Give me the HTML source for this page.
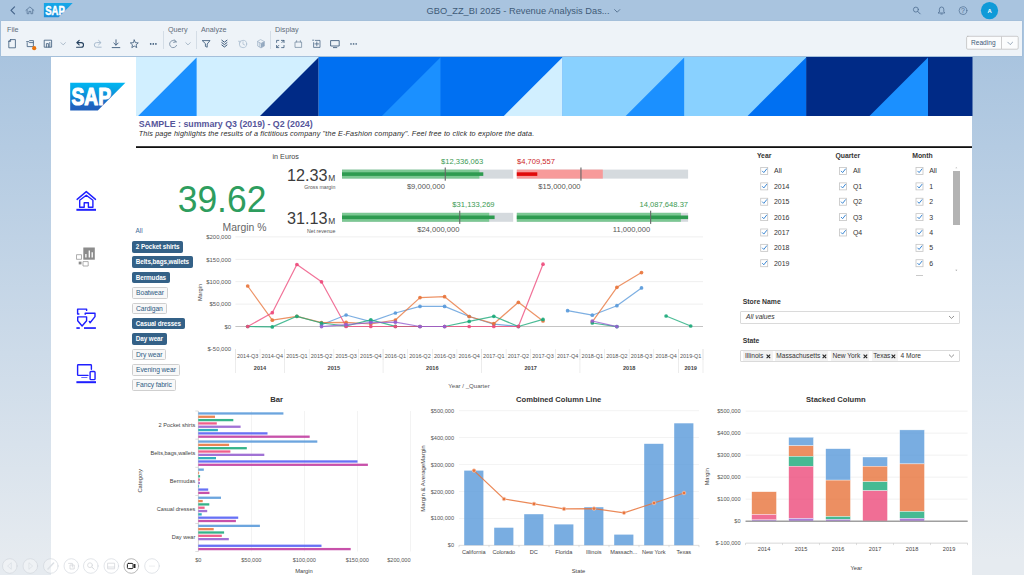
<!DOCTYPE html>
<html><head><meta charset="utf-8"><title>Revenue Analysis Dashboard</title>
<style>
*{box-sizing:border-box;margin:0;padding:0}
html,body{width:1024px;height:575px;overflow:hidden}
body{font-family:"Liberation Sans",sans-serif;position:relative;background:linear-gradient(to bottom,#a9c4df 0,#a9c4df 56px,#e6ebf0 560px,#e6ebf0 100%);color:#333}
.abs{position:absolute}
#hdr{left:0;top:0;width:1024px;height:21px;background:#a9c4df}
#tb{left:1px;top:21px;width:1021px;height:35px;background:#eef3f8;border-radius:0;box-shadow:0 0 1px rgba(120,150,180,.5)}
#page{left:51px;top:57px;width:921px;height:518px;background:#fff}
.t{position:absolute;white-space:nowrap;line-height:1}
svg{position:absolute;left:0;top:0;overflow:visible}
svg text{font-family:"Liberation Sans",sans-serif}
.cat{position:absolute;left:132px;height:11.5px;font-size:6.6px;line-height:10px;padding:0 3.1px;border-radius:1.5px;white-space:nowrap;letter-spacing:-0.1px}
.cat.s{background:#346187;color:#fff;font-weight:bold;border:0.7px solid #346187;font-size:6.35px;padding:0 2.8px}
.cat.u{background:#f8f8f8;color:#2f5c84;border:0.7px solid #cfcfcf;font-size:6.75px}
.cb{position:absolute;width:7px;height:7px;border:0.7px solid #a9a9a9;background:#fff;border-radius:.5px}
.cl{position:absolute;font-size:6.95px;line-height:8px;color:#333;white-space:nowrap}
.fh{position:absolute;font-size:6.85px;font-weight:bold;color:#333;line-height:8px;white-space:nowrap}
.dd{position:absolute;left:740px;width:220px;height:12.5px;border:0.7px solid #dadada;background:#fff;border-radius:1px}
.tok{position:absolute;top:351.3px;height:9.6px;background:#f2f2f2;font-size:6.6px;line-height:9.6px;color:#333;white-space:nowrap;padding-left:1.6px;border-radius:.5px}
</style></head><body>
<div id="hdr" class="abs"></div>
<div id="tb" class="abs"></div>
<div id="page" class="abs"></div>
<svg width="1024" height="575" viewBox="0 0 1024 575" style="z-index:1"><rect x="136" y="57" width="836" height="59" fill="#d1efff"/><rect x="136" y="57" width="61.099999999999994" height="59" fill="#d1efff"/><rect x="196.6" y="57" width="122.4" height="59" fill="#d1efff"/><rect x="318.5" y="57" width="122.39999999999998" height="59" fill="#0070f2"/><rect x="440.4" y="57" width="122.39999999999998" height="59" fill="#0070f2"/><rect x="562.3" y="57" width="122.40000000000009" height="59" fill="#89d1ff"/><rect x="684.2" y="57" width="122.39999999999998" height="59" fill="#89d1ff"/><rect x="806.1" y="57" width="122.39999999999998" height="59" fill="#002a86"/><rect x="928.0" y="57" width="44.5" height="59" fill="#002a86"/><polygon points="138.1,116 196.6,57.5 196.6,116" fill="#1b90ff"/><polygon points="260.0,116 318.5,57.5 318.5,116" fill="#002a86"/><polygon points="381.9,116 440.4,57.5 440.4,116" fill="#1b90ff"/><polygon points="503.79999999999995,116 562.3,57.5 562.3,116" fill="#d1efff"/><polygon points="625.7,116 684.2,57.5 684.2,116" fill="#1b90ff"/><polygon points="747.6,116 806.1,57.5 806.1,116" fill="#0070f2"/><polygon points="869.5,116 928.0,57.5 928.0,116" fill="#1b90ff"/><rect x="136" y="146.2" width="836" height="1.8" fill="#111"/></svg><svg width="1024" height="575" viewBox="0 0 1024 575" style="z-index:2"><defs><linearGradient id="g1" x1="0" y1="0" x2="0" y2="1"><stop offset="0" stop-color="#00b6f1"/><stop offset="0.25" stop-color="#06a5e5"/><stop offset="0.8" stop-color="#1e64c0"/><stop offset="1" stop-color="#1f5fbb"/></linearGradient></defs><polygon points="70.2,82.8 125.4,82.8 97.80000000000001,110.4 70.2,110.4" fill="url(#g1)"/><text x="71.4" y="105.1" font-size="23.4" font-weight="bold" fill="#fff" stroke="#fff" stroke-width="1.2" stroke-linejoin="round" textLength="39.6" lengthAdjust="spacingAndGlyphs">SAP</text><text x="138.7" y="126.9" font-size="8.9" fill="#56569a" text-anchor="start" font-weight="bold" font-style="normal" textLength="174" lengthAdjust="spacingAndGlyphs">SAMPLE : summary Q3 (2019) - Q2 (2024)</text><text x="138.7" y="135.9" font-size="7.2" fill="#2a2a2a" text-anchor="start" font-weight="normal" font-style="italic" textLength="395.5" lengthAdjust="spacing">This page highlights the results of a fictitious company "the E-Fashion company". Feel free to click to explore the data.</text><text x="177.7" y="211.6" font-size="37" fill="#2e9d5e" text-anchor="start" font-weight="normal" font-style="normal" textLength="88.7" lengthAdjust="spacingAndGlyphs">39.62</text><text x="266.5" y="231" font-size="10.4" fill="#666" text-anchor="end" font-weight="normal" font-style="normal" >Margin %</text><text x="272.5" y="159.2" font-size="7.2" fill="#444" text-anchor="start" font-weight="normal" font-style="normal" >in Euros</text><text x="327.4" y="180.5" font-size="16.2" fill="#3c3c3c" text-anchor="end" font-weight="normal" font-style="normal" >12.33</text><text x="328.2" y="180.5" font-size="8.4" fill="#3c3c3c" text-anchor="start" font-weight="normal" font-style="normal" >M</text><text x="335.3" y="189.1" font-size="5.2" fill="#555" text-anchor="end" font-weight="normal" font-style="normal" >Gross margin</text><text x="327.4" y="224" font-size="16.2" fill="#3c3c3c" text-anchor="end" font-weight="normal" font-style="normal" >31.13</text><text x="328.2" y="224" font-size="8.4" fill="#3c3c3c" text-anchor="start" font-weight="normal" font-style="normal" >M</text><text x="335.3" y="232.6" font-size="5.2" fill="#555" text-anchor="end" font-weight="normal" font-style="normal" >Net revenue</text><rect x="342" y="169.6" width="171.20000000000005" height="9" fill="#d5dade"/><rect x="342" y="169.6" width="137.39999999999998" height="9" fill="#7cc893"/><rect x="342" y="172.29999999999998" width="141.3" height="3.6" fill="#2e9b50"/><rect x="444.7" y="167.5" width="1.1" height="13.2" fill="#666"/><text x="483.3" y="163.7" font-size="7.6" fill="#3a9a52" text-anchor="end" font-weight="normal" font-style="normal" >$12,336,063</text><text x="444.9" y="188.6" font-size="7.6" fill="#555" text-anchor="end" font-weight="normal" font-style="normal" >$9,000,000</text><rect x="516.8" y="169.6" width="171.30000000000007" height="9" fill="#d5dade"/><rect x="516.8" y="169.6" width="86.0" height="9" fill="#f79a9a"/><rect x="516.8" y="172.29999999999998" width="20.5" height="3.6" fill="#e00b0b"/><rect x="580.4" y="167.5" width="1.1" height="13.2" fill="#666"/><text x="517" y="163.7" font-size="7.6" fill="#cc1f1f" text-anchor="start" font-weight="normal" font-style="normal" >$4,709,557</text><text x="580.6" y="188.6" font-size="7.6" fill="#555" text-anchor="end" font-weight="normal" font-style="normal" >$15,000,000</text><rect x="342" y="212.8" width="171.20000000000005" height="9" fill="#d5dade"/><rect x="342" y="212.8" width="147.2" height="9" fill="#7cc893"/><rect x="342" y="215.5" width="152.60000000000002" height="3.6" fill="#2e9b50"/><rect x="459.2" y="210.70000000000002" width="1.1" height="13.2" fill="#666"/><text x="494.6" y="206.9" font-size="7.6" fill="#3a9a52" text-anchor="end" font-weight="normal" font-style="normal" >$31,133,269</text><text x="459.4" y="231.8" font-size="7.6" fill="#555" text-anchor="end" font-weight="normal" font-style="normal" >$24,000,000</text><rect x="516.8" y="212.8" width="171.30000000000007" height="9" fill="#d5dade"/><rect x="516.8" y="212.8" width="164.10000000000002" height="9" fill="#7cc893"/><rect x="516.8" y="215.5" width="171.30000000000007" height="3.6" fill="#2e9b50"/><rect x="650.1" y="210.70000000000002" width="1.1" height="13.2" fill="#666"/><text x="688.1" y="206.9" font-size="7.6" fill="#3a9a52" text-anchor="end" font-weight="normal" font-style="normal" >14,087,648.37</text><text x="650.3000000000001" y="231.8" font-size="7.6" fill="#555" text-anchor="end" font-weight="normal" font-style="normal" >11,000,000</text><text x="231" y="351.09999999999997" font-size="5.95" fill="#555" text-anchor="end" font-weight="normal" font-style="normal" >$-50,000</text><rect x="235.4" y="326.1" width="467.6" height="0.8" fill="#b5b5b5"/><text x="231" y="328.7" font-size="5.95" fill="#555" text-anchor="end" font-weight="normal" font-style="normal" >$0</text><rect x="235.4" y="303.7" width="467.6" height="0.8" fill="#ebebeb"/><text x="231" y="306.29999999999995" font-size="5.95" fill="#555" text-anchor="end" font-weight="normal" font-style="normal" >$50,000</text><rect x="235.4" y="281.3" width="467.6" height="0.8" fill="#ebebeb"/><text x="231" y="283.9" font-size="5.95" fill="#555" text-anchor="end" font-weight="normal" font-style="normal" >$100,000</text><rect x="235.4" y="258.9" width="467.6" height="0.8" fill="#ebebeb"/><text x="231" y="261.49999999999994" font-size="5.95" fill="#555" text-anchor="end" font-weight="normal" font-style="normal" >$150,000</text><rect x="235.4" y="236.49999999999997" width="467.6" height="0.8" fill="#ebebeb"/><text x="231" y="239.09999999999997" font-size="5.95" fill="#555" text-anchor="end" font-weight="normal" font-style="normal" >$200,000</text><text transform="translate(201.6,292.5) rotate(-90)" font-size="5.6" fill="#444" text-anchor="middle">Margin</text><rect x="235.1" y="349" width="0.6" height="11" fill="#e4e4e4"/><rect x="259.7105263157895" y="349" width="0.6" height="11" fill="#e4e4e4"/><rect x="284.32105263157894" y="349" width="0.6" height="11" fill="#e4e4e4"/><rect x="308.93157894736845" y="349" width="0.6" height="11" fill="#e4e4e4"/><rect x="333.5421052631579" y="349" width="0.6" height="11" fill="#e4e4e4"/><rect x="358.15263157894736" y="349" width="0.6" height="11" fill="#e4e4e4"/><rect x="382.7631578947368" y="349" width="0.6" height="11" fill="#e4e4e4"/><rect x="407.3736842105263" y="349" width="0.6" height="11" fill="#e4e4e4"/><rect x="431.9842105263158" y="349" width="0.6" height="11" fill="#e4e4e4"/><rect x="456.5947368421053" y="349" width="0.6" height="11" fill="#e4e4e4"/><rect x="481.20526315789476" y="349" width="0.6" height="11" fill="#e4e4e4"/><rect x="505.8157894736842" y="349" width="0.6" height="11" fill="#e4e4e4"/><rect x="530.4263157894737" y="349" width="0.6" height="11" fill="#e4e4e4"/><rect x="555.0368421052632" y="349" width="0.6" height="11" fill="#e4e4e4"/><rect x="579.6473684210526" y="349" width="0.6" height="11" fill="#e4e4e4"/><rect x="604.2578947368422" y="349" width="0.6" height="11" fill="#e4e4e4"/><rect x="628.8684210526317" y="349" width="0.6" height="11" fill="#e4e4e4"/><rect x="653.4789473684211" y="349" width="0.6" height="11" fill="#e4e4e4"/><rect x="678.0894736842106" y="349" width="0.6" height="11" fill="#e4e4e4"/><rect x="702.7" y="349" width="0.6" height="11" fill="#e4e4e4"/><rect x="235.1" y="349" width="0.6" height="24" fill="#e0e0e0"/><rect x="284.32105263157894" y="349" width="0.6" height="24" fill="#e0e0e0"/><rect x="382.7631578947368" y="349" width="0.6" height="24" fill="#e0e0e0"/><rect x="481.20526315789476" y="349" width="0.6" height="24" fill="#e0e0e0"/><rect x="579.6473684210526" y="349" width="0.6" height="24" fill="#e0e0e0"/><rect x="678.0894736842106" y="349" width="0.6" height="24" fill="#e0e0e0"/><rect x="702.7" y="349" width="0.6" height="24" fill="#e0e0e0"/><text x="247.7" y="357.5" font-size="5.5" fill="#555" text-anchor="middle" font-weight="normal" font-style="normal" >2014-Q3</text><text x="272.3" y="357.5" font-size="5.5" fill="#555" text-anchor="middle" font-weight="normal" font-style="normal" >2014-Q4</text><text x="296.9" y="357.5" font-size="5.5" fill="#555" text-anchor="middle" font-weight="normal" font-style="normal" >2015-Q1</text><text x="321.5" y="357.5" font-size="5.5" fill="#555" text-anchor="middle" font-weight="normal" font-style="normal" >2015-Q2</text><text x="346.1" y="357.5" font-size="5.5" fill="#555" text-anchor="middle" font-weight="normal" font-style="normal" >2015-Q3</text><text x="370.8" y="357.5" font-size="5.5" fill="#555" text-anchor="middle" font-weight="normal" font-style="normal" >2015-Q4</text><text x="395.4" y="357.5" font-size="5.5" fill="#555" text-anchor="middle" font-weight="normal" font-style="normal" >2016-Q1</text><text x="420.0" y="357.5" font-size="5.5" fill="#555" text-anchor="middle" font-weight="normal" font-style="normal" >2016-Q2</text><text x="444.6" y="357.5" font-size="5.5" fill="#555" text-anchor="middle" font-weight="normal" font-style="normal" >2016-Q3</text><text x="469.2" y="357.5" font-size="5.5" fill="#555" text-anchor="middle" font-weight="normal" font-style="normal" >2016-Q4</text><text x="493.8" y="357.5" font-size="5.5" fill="#555" text-anchor="middle" font-weight="normal" font-style="normal" >2017-Q1</text><text x="518.4" y="357.5" font-size="5.5" fill="#555" text-anchor="middle" font-weight="normal" font-style="normal" >2017-Q2</text><text x="543.0" y="357.5" font-size="5.5" fill="#555" text-anchor="middle" font-weight="normal" font-style="normal" >2017-Q3</text><text x="567.6" y="357.5" font-size="5.5" fill="#555" text-anchor="middle" font-weight="normal" font-style="normal" >2017-Q4</text><text x="592.3" y="357.5" font-size="5.5" fill="#555" text-anchor="middle" font-weight="normal" font-style="normal" >2018-Q1</text><text x="616.9" y="357.5" font-size="5.5" fill="#555" text-anchor="middle" font-weight="normal" font-style="normal" >2018-Q2</text><text x="641.5" y="357.5" font-size="5.5" fill="#555" text-anchor="middle" font-weight="normal" font-style="normal" >2018-Q3</text><text x="666.1" y="357.5" font-size="5.5" fill="#555" text-anchor="middle" font-weight="normal" font-style="normal" >2018-Q4</text><text x="690.7" y="357.5" font-size="5.5" fill="#555" text-anchor="middle" font-weight="normal" font-style="normal" >2019-Q1</text><text x="260.0" y="369.8" font-size="5.6" fill="#444" text-anchor="middle" font-weight="bold" font-style="normal" >2014</text><text x="333.8" y="369.8" font-size="5.6" fill="#444" text-anchor="middle" font-weight="bold" font-style="normal" >2015</text><text x="432.3" y="369.8" font-size="5.6" fill="#444" text-anchor="middle" font-weight="bold" font-style="normal" >2016</text><text x="530.7" y="369.8" font-size="5.6" fill="#444" text-anchor="middle" font-weight="bold" font-style="normal" >2017</text><text x="629.2" y="369.8" font-size="5.6" fill="#444" text-anchor="middle" font-weight="bold" font-style="normal" >2018</text><text x="690.7" y="369.8" font-size="5.6" fill="#444" text-anchor="middle" font-weight="bold" font-style="normal" >2019</text><text x="469" y="388.1" font-size="6.1" fill="#555" text-anchor="middle" font-weight="normal" font-style="normal" >Year / _Quarter</text><polyline points="321.5,324.7 346.1,315.0 370.8,321.6 395.4,313.0 420.0,306.4 444.6,306.4 469.2,316.5 493.8,324.2 518.4,326.4" fill="none" stroke="#5899DA" stroke-width="1.2" stroke-linejoin="round" opacity="0.78"/><circle cx="321.5" cy="324.7" r="1.85" fill="#5899DA" opacity="0.9"/><circle cx="346.1" cy="315.0" r="1.85" fill="#5899DA" opacity="0.9"/><circle cx="370.8" cy="321.6" r="1.85" fill="#5899DA" opacity="0.9"/><circle cx="395.4" cy="313.0" r="1.85" fill="#5899DA" opacity="0.9"/><circle cx="420.0" cy="306.4" r="1.85" fill="#5899DA" opacity="0.9"/><circle cx="444.6" cy="306.4" r="1.85" fill="#5899DA" opacity="0.9"/><circle cx="469.2" cy="316.5" r="1.85" fill="#5899DA" opacity="0.9"/><circle cx="493.8" cy="324.2" r="1.85" fill="#5899DA" opacity="0.9"/><circle cx="518.4" cy="326.4" r="1.85" fill="#5899DA" opacity="0.9"/><polyline points="567.6,310.7 592.3,315.2 616.9,305.7 641.5,287.9" fill="none" stroke="#5899DA" stroke-width="1.2" stroke-linejoin="round" opacity="0.78"/><circle cx="567.6" cy="310.7" r="1.85" fill="#5899DA" opacity="0.9"/><circle cx="592.3" cy="315.2" r="1.85" fill="#5899DA" opacity="0.9"/><circle cx="616.9" cy="305.7" r="1.85" fill="#5899DA" opacity="0.9"/><circle cx="641.5" cy="287.9" r="1.85" fill="#5899DA" opacity="0.9"/><polyline points="247.7,286.0 272.3,320.2 296.9,316.3 321.5,322.6 346.1,322.4 370.8,324.0 395.4,320.0 420.0,297.6 444.6,296.7 469.2,316.5 493.8,323.7 518.4,302.3 543.0,321.0" fill="none" stroke="#E8743B" stroke-width="1.2" stroke-linejoin="round" opacity="0.78"/><circle cx="247.7" cy="286.0" r="1.85" fill="#E8743B" opacity="0.9"/><circle cx="272.3" cy="320.2" r="1.85" fill="#E8743B" opacity="0.9"/><circle cx="296.9" cy="316.3" r="1.85" fill="#E8743B" opacity="0.9"/><circle cx="321.5" cy="322.6" r="1.85" fill="#E8743B" opacity="0.9"/><circle cx="346.1" cy="322.4" r="1.85" fill="#E8743B" opacity="0.9"/><circle cx="370.8" cy="324.0" r="1.85" fill="#E8743B" opacity="0.9"/><circle cx="395.4" cy="320.0" r="1.85" fill="#E8743B" opacity="0.9"/><circle cx="420.0" cy="297.6" r="1.85" fill="#E8743B" opacity="0.9"/><circle cx="444.6" cy="296.7" r="1.85" fill="#E8743B" opacity="0.9"/><circle cx="469.2" cy="316.5" r="1.85" fill="#E8743B" opacity="0.9"/><circle cx="493.8" cy="323.7" r="1.85" fill="#E8743B" opacity="0.9"/><circle cx="518.4" cy="302.3" r="1.85" fill="#E8743B" opacity="0.9"/><circle cx="543.0" cy="321.0" r="1.85" fill="#E8743B" opacity="0.9"/><polyline points="592.3,321.8 616.9,287.3 641.5,272.6" fill="none" stroke="#E8743B" stroke-width="1.2" stroke-linejoin="round" opacity="0.78"/><circle cx="592.3" cy="321.8" r="1.85" fill="#E8743B" opacity="0.9"/><circle cx="616.9" cy="287.3" r="1.85" fill="#E8743B" opacity="0.9"/><circle cx="641.5" cy="272.6" r="1.85" fill="#E8743B" opacity="0.9"/><polyline points="247.7,326.5 272.3,326.9 296.9,316.3 321.5,323.0 346.1,326.0 370.8,319.8 395.4,326.4 420.0,326.5 444.6,326.5 469.2,321.4 493.8,316.3 518.4,326.5 543.0,319.4" fill="none" stroke="#19A979" stroke-width="1.2" stroke-linejoin="round" opacity="0.78"/><circle cx="247.7" cy="326.5" r="1.85" fill="#19A979" opacity="0.9"/><circle cx="272.3" cy="326.9" r="1.85" fill="#19A979" opacity="0.9"/><circle cx="296.9" cy="316.3" r="1.85" fill="#19A979" opacity="0.9"/><circle cx="321.5" cy="323.0" r="1.85" fill="#19A979" opacity="0.9"/><circle cx="346.1" cy="326.0" r="1.85" fill="#19A979" opacity="0.9"/><circle cx="370.8" cy="319.8" r="1.85" fill="#19A979" opacity="0.9"/><circle cx="395.4" cy="326.4" r="1.85" fill="#19A979" opacity="0.9"/><circle cx="420.0" cy="326.5" r="1.85" fill="#19A979" opacity="0.9"/><circle cx="444.6" cy="326.5" r="1.85" fill="#19A979" opacity="0.9"/><circle cx="469.2" cy="321.4" r="1.85" fill="#19A979" opacity="0.9"/><circle cx="493.8" cy="316.3" r="1.85" fill="#19A979" opacity="0.9"/><circle cx="518.4" cy="326.5" r="1.85" fill="#19A979" opacity="0.9"/><circle cx="543.0" cy="319.4" r="1.85" fill="#19A979" opacity="0.9"/><polyline points="592.3,323.0 616.9,326.6" fill="none" stroke="#19A979" stroke-width="1.2" stroke-linejoin="round" opacity="0.78"/><circle cx="592.3" cy="323.0" r="1.85" fill="#19A979" opacity="0.9"/><circle cx="616.9" cy="326.6" r="1.85" fill="#19A979" opacity="0.9"/><polyline points="666.1,316.0 690.7,326.0" fill="none" stroke="#19A979" stroke-width="1.2" stroke-linejoin="round" opacity="0.78"/><circle cx="666.1" cy="316.0" r="1.85" fill="#19A979" opacity="0.9"/><circle cx="690.7" cy="326.0" r="1.85" fill="#19A979" opacity="0.9"/><polyline points="247.7,326.5 272.3,312.7 296.9,264.5 321.5,281.8 346.1,326.5 370.8,326.5 395.4,326.5 420.0,326.5 444.6,326.5 469.2,326.5 493.8,326.5 518.4,326.5 543.0,264.2" fill="none" stroke="#ED4A7B" stroke-width="1.2" stroke-linejoin="round" opacity="0.78"/><circle cx="247.7" cy="326.5" r="1.85" fill="#ED4A7B" opacity="0.9"/><circle cx="272.3" cy="312.7" r="1.85" fill="#ED4A7B" opacity="0.9"/><circle cx="296.9" cy="264.5" r="1.85" fill="#ED4A7B" opacity="0.9"/><circle cx="321.5" cy="281.8" r="1.85" fill="#ED4A7B" opacity="0.9"/><circle cx="346.1" cy="326.5" r="1.85" fill="#ED4A7B" opacity="0.9"/><circle cx="370.8" cy="326.5" r="1.85" fill="#ED4A7B" opacity="0.9"/><circle cx="395.4" cy="326.5" r="1.85" fill="#ED4A7B" opacity="0.9"/><circle cx="420.0" cy="326.5" r="1.85" fill="#ED4A7B" opacity="0.9"/><circle cx="444.6" cy="326.5" r="1.85" fill="#ED4A7B" opacity="0.9"/><circle cx="469.2" cy="326.5" r="1.85" fill="#ED4A7B" opacity="0.9"/><circle cx="493.8" cy="326.5" r="1.85" fill="#ED4A7B" opacity="0.9"/><circle cx="518.4" cy="326.5" r="1.85" fill="#ED4A7B" opacity="0.9"/><circle cx="543.0" cy="264.2" r="1.85" fill="#ED4A7B" opacity="0.9"/><polyline points="321.5,326.6 346.1,324.7 370.8,322.6 395.4,322.2 420.0,326.5 444.6,326.5" fill="none" stroke="#945ECF" stroke-width="1.2" stroke-linejoin="round" opacity="0.78"/><circle cx="321.5" cy="326.6" r="1.85" fill="#945ECF" opacity="0.9"/><circle cx="346.1" cy="324.7" r="1.85" fill="#945ECF" opacity="0.9"/><circle cx="370.8" cy="322.6" r="1.85" fill="#945ECF" opacity="0.9"/><circle cx="395.4" cy="322.2" r="1.85" fill="#945ECF" opacity="0.9"/><circle cx="420.0" cy="326.5" r="1.85" fill="#945ECF" opacity="0.9"/><circle cx="444.6" cy="326.5" r="1.85" fill="#945ECF" opacity="0.9"/><polyline points="592.3,321.0 616.9,326.6" fill="none" stroke="#945ECF" stroke-width="1.2" stroke-linejoin="round" opacity="0.78"/><circle cx="592.3" cy="321.0" r="1.85" fill="#945ECF" opacity="0.9"/><circle cx="616.9" cy="326.6" r="1.85" fill="#945ECF" opacity="0.9"/><text x="276.6" y="402.1" font-size="7.7" fill="#333" text-anchor="middle" font-weight="bold" font-style="normal" >Bar</text><rect x="251.0" y="411.0" width="0.6" height="140.5" fill="#ececec"/><rect x="304.0" y="411.0" width="0.6" height="140.5" fill="#ececec"/><rect x="357.0" y="411.0" width="0.6" height="140.5" fill="#ececec"/><rect x="410.0" y="411.0" width="0.6" height="140.5" fill="#ececec"/><rect x="197.9" y="411.0" width="0.8" height="140.5" fill="#c8c8c8"/><rect x="195.3" y="410.7" width="3" height="0.6" fill="#c8c8c8"/><text x="195.3" y="426.8" font-size="5.6" fill="#444" text-anchor="end" font-weight="normal" font-style="normal" >2 Pocket shirts</text><rect x="198.3" y="412.31" width="85.1" height="2.3" fill="#5899DA" opacity="0.88"/><rect x="198.3" y="415.63" width="16.7" height="2.3" fill="#E8743B" opacity="0.88"/><rect x="198.3" y="418.95" width="35" height="2.3" fill="#19A979" opacity="0.88"/><rect x="198.3" y="422.27" width="18.5" height="2.3" fill="#ED4A7B" opacity="0.88"/><rect x="198.3" y="425.59" width="42.3" height="2.3" fill="#945ECF" opacity="0.88"/><rect x="198.3" y="428.91" width="19.6" height="2.3" fill="#13A4B4" opacity="0.88"/><rect x="198.3" y="432.23" width="69.2" height="2.3" fill="#525DF4" opacity="0.88"/><rect x="198.3" y="435.55" width="111.4" height="2.3" fill="#BF399E" opacity="0.88"/><rect x="195.3" y="438.8" width="3" height="0.6" fill="#c8c8c8"/><text x="195.3" y="454.9" font-size="5.6" fill="#444" text-anchor="end" font-weight="normal" font-style="normal" >Belts,bags,wallets</text><rect x="198.3" y="440.41" width="119" height="2.3" fill="#5899DA" opacity="0.88"/><rect x="198.3" y="443.73" width="30.8" height="2.3" fill="#E8743B" opacity="0.88"/><rect x="198.3" y="447.05" width="48.5" height="2.3" fill="#19A979" opacity="0.88"/><rect x="198.3" y="450.37" width="32.1" height="2.3" fill="#ED4A7B" opacity="0.88"/><rect x="198.3" y="453.69" width="66" height="2.3" fill="#945ECF" opacity="0.88"/><rect x="198.3" y="457.01" width="17.7" height="2.3" fill="#13A4B4" opacity="0.88"/><rect x="198.3" y="460.33" width="159.2" height="2.3" fill="#525DF4" opacity="0.88"/><rect x="198.3" y="463.65" width="169.6" height="2.3" fill="#BF399E" opacity="0.88"/><rect x="195.3" y="466.9" width="3" height="0.6" fill="#c8c8c8"/><text x="195.3" y="482.9" font-size="5.6" fill="#444" text-anchor="end" font-weight="normal" font-style="normal" >Bermudas</text><rect x="198.3" y="468.51" width="5.5" height="2.3" fill="#5899DA" opacity="0.88"/><rect x="198.3" y="471.83" width="0.8" height="2.3" fill="#E8743B" opacity="0.88"/><rect x="198.3" y="475.15" width="1.8" height="2.3" fill="#19A979" opacity="0.88"/><rect x="198.3" y="478.47" width="1.6" height="2.3" fill="#ED4A7B" opacity="0.88"/><rect x="198.3" y="481.79" width="1.6" height="2.3" fill="#945ECF" opacity="0.88"/><rect x="198.3" y="485.11" width="0.8" height="2.3" fill="#13A4B4" opacity="0.88"/><rect x="198.3" y="488.43" width="9.9" height="2.3" fill="#525DF4" opacity="0.88"/><rect x="198.3" y="491.75" width="11.2" height="2.3" fill="#BF399E" opacity="0.88"/><rect x="195.3" y="495.0" width="3" height="0.6" fill="#c8c8c8"/><text x="195.3" y="511.1" font-size="5.6" fill="#444" text-anchor="end" font-weight="normal" font-style="normal" >Casual dresses</text><rect x="198.3" y="496.61" width="22.7" height="2.3" fill="#5899DA" opacity="0.88"/><rect x="198.3" y="499.93" width="4.4" height="2.3" fill="#E8743B" opacity="0.88"/><rect x="198.3" y="503.25" width="11" height="2.3" fill="#19A979" opacity="0.88"/><rect x="198.3" y="506.57" width="6.3" height="2.3" fill="#ED4A7B" opacity="0.88"/><rect x="198.3" y="509.89" width="8.9" height="2.3" fill="#945ECF" opacity="0.88"/><rect x="198.3" y="513.21" width="3.4" height="2.3" fill="#13A4B4" opacity="0.88"/><rect x="198.3" y="516.53" width="39.9" height="2.3" fill="#525DF4" opacity="0.88"/><rect x="198.3" y="519.85" width="37.6" height="2.3" fill="#BF399E" opacity="0.88"/><rect x="195.3" y="523.1" width="3" height="0.6" fill="#c8c8c8"/><text x="195.3" y="539.1" font-size="5.6" fill="#444" text-anchor="end" font-weight="normal" font-style="normal" >Day wear</text><rect x="198.3" y="524.71" width="61.6" height="2.3" fill="#5899DA" opacity="0.88"/><rect x="198.3" y="528.03" width="15.4" height="2.3" fill="#E8743B" opacity="0.88"/><rect x="198.3" y="531.35" width="25.8" height="2.3" fill="#19A979" opacity="0.88"/><rect x="198.3" y="534.67" width="23.5" height="2.3" fill="#ED4A7B" opacity="0.88"/><rect x="198.3" y="537.99" width="30.5" height="2.3" fill="#945ECF" opacity="0.88"/><rect x="198.3" y="544.63" width="123.2" height="2.3" fill="#525DF4" opacity="0.88"/><rect x="198.3" y="547.95" width="152.4" height="2.3" fill="#BF399E" opacity="0.88"/><rect x="195.3" y="551.2" width="3" height="0.6" fill="#c8c8c8"/><text x="198.3" y="562" font-size="5.6" fill="#555" text-anchor="middle" font-weight="normal" font-style="normal" >$0</text><text x="251.3" y="562" font-size="5.6" fill="#555" text-anchor="middle" font-weight="normal" font-style="normal" >$50,000</text><text x="304.3" y="562" font-size="5.6" fill="#555" text-anchor="middle" font-weight="normal" font-style="normal" >$100,000</text><text x="357.3" y="562" font-size="5.6" fill="#555" text-anchor="middle" font-weight="normal" font-style="normal" >$150,000</text><text x="410.5" y="562" font-size="5.6" fill="#555" text-anchor="end" font-weight="normal" font-style="normal" >$200,000</text><text x="304" y="572.6" font-size="5.8" fill="#444" text-anchor="middle" font-weight="normal" font-style="normal" >Margin</text><text transform="translate(142.3,480.8) rotate(-90)" font-size="5.8" fill="#444" text-anchor="middle">Category</text><text x="558.7" y="402.1" font-size="7.6" fill="#333" text-anchor="middle" font-weight="bold" font-style="normal" textLength="85.2" lengthAdjust="spacing">Combined Column Line</text><rect x="459.0" y="544.9" width="240.0" height="0.6" fill="#c8c8c8"/><text x="454" y="547.3" font-size="5.6" fill="#555" text-anchor="end" font-weight="normal" font-style="normal" >$0</text><rect x="459.0" y="518.02" width="240.0" height="0.6" fill="#ececec"/><text x="454" y="520.4" font-size="5.6" fill="#555" text-anchor="end" font-weight="normal" font-style="normal" >$100,000</text><rect x="459.0" y="491.14" width="240.0" height="0.6" fill="#ececec"/><text x="454" y="493.5" font-size="5.6" fill="#555" text-anchor="end" font-weight="normal" font-style="normal" >$200,000</text><rect x="459.0" y="464.26" width="240.0" height="0.6" fill="#ececec"/><text x="454" y="466.7" font-size="5.6" fill="#555" text-anchor="end" font-weight="normal" font-style="normal" >$300,000</text><rect x="459.0" y="437.38" width="240.0" height="0.6" fill="#ececec"/><text x="454" y="439.8" font-size="5.6" fill="#555" text-anchor="end" font-weight="normal" font-style="normal" >$400,000</text><rect x="459.0" y="410.5" width="240.0" height="0.6" fill="#ececec"/><text x="454" y="412.9" font-size="5.6" fill="#555" text-anchor="end" font-weight="normal" font-style="normal" >$500,000</text><rect x="464.2" y="470.6" width="19.2" height="74.6" fill="#5899DA" opacity="0.8"/><text x="473.8" y="553.7" font-size="5.6" fill="#444" text-anchor="middle" font-weight="normal" font-style="normal" >California</text><rect x="494.2" y="527.7" width="19.2" height="17.5" fill="#5899DA" opacity="0.8"/><text x="503.8" y="553.7" font-size="5.6" fill="#444" text-anchor="middle" font-weight="normal" font-style="normal" >Colorado</text><rect x="524.2" y="514.2" width="19.2" height="31.0" fill="#5899DA" opacity="0.8"/><text x="533.8" y="553.7" font-size="5.6" fill="#444" text-anchor="middle" font-weight="normal" font-style="normal" >DC</text><rect x="554.2" y="524.4" width="19.2" height="20.8" fill="#5899DA" opacity="0.8"/><text x="563.8" y="553.7" font-size="5.6" fill="#444" text-anchor="middle" font-weight="normal" font-style="normal" >Florida</text><rect x="584.2" y="507.2" width="19.2" height="38.0" fill="#5899DA" opacity="0.8"/><text x="593.8" y="553.7" font-size="5.6" fill="#444" text-anchor="middle" font-weight="normal" font-style="normal" >Illinois</text><rect x="614.2" y="534.6" width="19.2" height="10.6" fill="#5899DA" opacity="0.8"/><text x="623.8" y="553.7" font-size="5.6" fill="#444" text-anchor="middle" font-weight="normal" font-style="normal" >Massach...</text><rect x="644.2" y="443.8" width="19.2" height="101.4" fill="#5899DA" opacity="0.8"/><text x="653.8" y="553.7" font-size="5.6" fill="#444" text-anchor="middle" font-weight="normal" font-style="normal" >New York</text><rect x="674.2" y="423.3" width="19.2" height="121.9" fill="#5899DA" opacity="0.8"/><text x="683.8" y="553.7" font-size="5.6" fill="#444" text-anchor="middle" font-weight="normal" font-style="normal" >Texas</text><rect x="458.7" y="545.2" width="0.6" height="2" fill="#c8c8c8"/><rect x="488.7" y="545.2" width="0.6" height="2" fill="#c8c8c8"/><rect x="518.7" y="545.2" width="0.6" height="2" fill="#c8c8c8"/><rect x="548.7" y="545.2" width="0.6" height="2" fill="#c8c8c8"/><rect x="578.7" y="545.2" width="0.6" height="2" fill="#c8c8c8"/><rect x="608.7" y="545.2" width="0.6" height="2" fill="#c8c8c8"/><rect x="638.7" y="545.2" width="0.6" height="2" fill="#c8c8c8"/><rect x="668.7" y="545.2" width="0.6" height="2" fill="#c8c8c8"/><rect x="698.7" y="545.2" width="0.6" height="2" fill="#c8c8c8"/><polyline points="474.0,470.6 504.0,499.0 534.0,503.9 564.0,508.9 594.0,508.6 624.0,512.8 654.0,503.0 684.0,493.0" fill="none" stroke="#E8743B" stroke-width="1.2" opacity="0.85"/><circle cx="474.0" cy="470.6" r="1.8" fill="#E8743B" stroke="#f6c4ad" stroke-width="0.7"/><circle cx="504.0" cy="499.0" r="1.8" fill="#E8743B" stroke="#f6c4ad" stroke-width="0.7"/><circle cx="534.0" cy="503.9" r="1.8" fill="#E8743B" stroke="#f6c4ad" stroke-width="0.7"/><circle cx="564.0" cy="508.9" r="1.8" fill="#E8743B" stroke="#f6c4ad" stroke-width="0.7"/><circle cx="594.0" cy="508.6" r="1.8" fill="#E8743B" stroke="#f6c4ad" stroke-width="0.7"/><circle cx="624.0" cy="512.8" r="1.8" fill="#E8743B" stroke="#f6c4ad" stroke-width="0.7"/><circle cx="654.0" cy="503.0" r="1.8" fill="#E8743B" stroke="#f6c4ad" stroke-width="0.7"/><circle cx="684.0" cy="493.0" r="1.8" fill="#E8743B" stroke="#f6c4ad" stroke-width="0.7"/><text x="578.5" y="572.6" font-size="5.8" fill="#444" text-anchor="middle" font-weight="normal" font-style="normal" >State</text><text transform="translate(425,478.5) rotate(-90)" font-size="6.05" fill="#444" text-anchor="middle">Margin &amp; AverageMargin</text><text x="835.8" y="402.1" font-size="7.6" fill="#333" text-anchor="middle" font-weight="bold" font-style="normal" textLength="59.5" lengthAdjust="spacing">Stacked Column</text><rect x="745.6" y="542.75" width="222.0" height="0.7" fill="#c8c8c8"/><text x="740.6" y="545.2" font-size="5.6" fill="#555" text-anchor="end" font-weight="normal" font-style="normal" >$-100,000</text><rect x="745.6" y="520.75" width="222.0" height="0.7" fill="#9a9a9a"/><text x="740.6" y="523.2" font-size="5.6" fill="#555" text-anchor="end" font-weight="normal" font-style="normal" >$0</text><rect x="745.6" y="498.75" width="222.0" height="0.7" fill="#ececec"/><text x="740.6" y="501.2" font-size="5.6" fill="#555" text-anchor="end" font-weight="normal" font-style="normal" >$100,000</text><rect x="745.6" y="476.75" width="222.0" height="0.7" fill="#ececec"/><text x="740.6" y="479.2" font-size="5.6" fill="#555" text-anchor="end" font-weight="normal" font-style="normal" >$200,000</text><rect x="745.6" y="454.75" width="222.0" height="0.7" fill="#ececec"/><text x="740.6" y="457.2" font-size="5.6" fill="#555" text-anchor="end" font-weight="normal" font-style="normal" >$300,000</text><rect x="745.6" y="432.75" width="222.0" height="0.7" fill="#ececec"/><text x="740.6" y="435.2" font-size="5.6" fill="#555" text-anchor="end" font-weight="normal" font-style="normal" >$400,000</text><rect x="745.6" y="410.75" width="222.0" height="0.7" fill="#ececec"/><text x="740.6" y="413.2" font-size="5.6" fill="#555" text-anchor="end" font-weight="normal" font-style="normal" >$500,000</text><rect x="751.7" y="491.7" width="24.8" height="22.8" fill="#E8743B" opacity="0.8" stroke="#fff" stroke-width="0.4"/><rect x="751.7" y="514.5" width="24.8" height="5.4" fill="#ED4A7B" opacity="0.8" stroke="#fff" stroke-width="0.4"/><rect x="751.7" y="519.9" width="24.8" height="1.2" fill="#945ECF" opacity="0.8" stroke="#fff" stroke-width="0.4"/><text x="764.1" y="551.3" font-size="5.6" fill="#444" text-anchor="middle" font-weight="normal" font-style="normal" >2014</text><rect x="788.7" y="437.2" width="24.8" height="8.6" fill="#5899DA" opacity="0.8" stroke="#fff" stroke-width="0.4"/><rect x="788.7" y="445.8" width="24.8" height="10.5" fill="#E8743B" opacity="0.8" stroke="#fff" stroke-width="0.4"/><rect x="788.7" y="456.3" width="24.8" height="9.9" fill="#19A979" opacity="0.8" stroke="#fff" stroke-width="0.4"/><rect x="788.7" y="466.2" width="24.8" height="52.2" fill="#ED4A7B" opacity="0.8" stroke="#fff" stroke-width="0.4"/><rect x="788.7" y="518.4" width="24.8" height="2.7" fill="#945ECF" opacity="0.8" stroke="#fff" stroke-width="0.4"/><text x="801.1" y="551.3" font-size="5.6" fill="#444" text-anchor="middle" font-weight="normal" font-style="normal" >2015</text><rect x="825.7" y="448.7" width="24.8" height="31.4" fill="#5899DA" opacity="0.8" stroke="#fff" stroke-width="0.4"/><rect x="825.7" y="480.1" width="24.8" height="36.4" fill="#E8743B" opacity="0.8" stroke="#fff" stroke-width="0.4"/><rect x="825.7" y="516.5" width="24.8" height="2.9" fill="#19A979" opacity="0.8" stroke="#fff" stroke-width="0.4"/><rect x="825.7" y="519.4" width="24.8" height="1.7" fill="#945ECF" opacity="0.8" stroke="#fff" stroke-width="0.4"/><text x="838.1" y="551.3" font-size="5.6" fill="#444" text-anchor="middle" font-weight="normal" font-style="normal" >2016</text><rect x="862.7" y="457.0" width="24.8" height="9.2" fill="#5899DA" opacity="0.8" stroke="#fff" stroke-width="0.4"/><rect x="862.7" y="466.2" width="24.8" height="15.6" fill="#E8743B" opacity="0.8" stroke="#fff" stroke-width="0.4"/><rect x="862.7" y="481.8" width="24.8" height="8.9" fill="#19A979" opacity="0.8" stroke="#fff" stroke-width="0.4"/><rect x="862.7" y="490.7" width="24.8" height="30.4" fill="#ED4A7B" opacity="0.8" stroke="#fff" stroke-width="0.4"/><text x="875.1" y="551.3" font-size="5.6" fill="#444" text-anchor="middle" font-weight="normal" font-style="normal" >2017</text><rect x="899.7" y="429.9" width="24.8" height="34.0" fill="#5899DA" opacity="0.8" stroke="#fff" stroke-width="0.4"/><rect x="899.7" y="463.9" width="24.8" height="47.6" fill="#E8743B" opacity="0.8" stroke="#fff" stroke-width="0.4"/><rect x="899.7" y="511.5" width="24.8" height="6.9" fill="#19A979" opacity="0.8" stroke="#fff" stroke-width="0.4"/><rect x="899.7" y="518.4" width="24.8" height="2.7" fill="#945ECF" opacity="0.8" stroke="#fff" stroke-width="0.4"/><text x="912.1" y="551.3" font-size="5.6" fill="#444" text-anchor="middle" font-weight="normal" font-style="normal" >2018</text><text x="949.1" y="551.3" font-size="5.6" fill="#444" text-anchor="middle" font-weight="normal" font-style="normal" >2019</text><rect x="745.3" y="543.1" width="0.6" height="2" fill="#c8c8c8"/><rect x="782.3" y="543.1" width="0.6" height="2" fill="#c8c8c8"/><rect x="819.3" y="543.1" width="0.6" height="2" fill="#c8c8c8"/><rect x="856.3" y="543.1" width="0.6" height="2" fill="#c8c8c8"/><rect x="893.3" y="543.1" width="0.6" height="2" fill="#c8c8c8"/><rect x="930.3" y="543.1" width="0.6" height="2" fill="#c8c8c8"/><rect x="967.3" y="543.1" width="0.6" height="2" fill="#c8c8c8"/><rect x="745.6" y="520.7" width="222.0" height="1.2" fill="#9a9a9a"/><text x="856.3" y="569.8" font-size="5.8" fill="#444" text-anchor="middle" font-weight="normal" font-style="normal" >Year</text><text transform="translate(709.3,476.8) rotate(-90)" font-size="5.6" fill="#444" text-anchor="middle">Margin</text></svg><div class="abs" style="left:0;top:0;width:1024px;height:575px;z-index:3"><div class="t" style="left:135.5px;top:228px;font-size:6.4px;color:#3d6a99">All</div><div class="cat s" style="top:241.10px">2 Pocket shirts</div><div class="cat s" style="top:256.47px">Belts,bags,wallets</div><div class="cat s" style="top:271.84px">Bermudas</div><div class="cat u" style="top:287.21px">Boatwear</div><div class="cat u" style="top:302.58px">Cardigan</div><div class="cat s" style="top:317.95px">Casual dresses</div><div class="cat s" style="top:333.32px">Day wear</div><div class="cat u" style="top:348.69px">Dry wear</div><div class="cat u" style="top:364.06px">Evening wear</div><div class="cat u" style="top:379.43px">Fancy fabric</div><div class="fh" style="left:756.9px;top:151.9px">Year</div><div class="fh" style="left:835.4px;top:151.9px">Quarter</div><div class="fh" style="left:912.2px;top:151.9px">Month</div><svg width="1024" height="575" viewBox="0 0 1024 575"><rect x="760.70" y="167.50" width="7" height="7" fill="#fff" stroke="#c4c4c4" stroke-width="0.8"/><path d="M762.20 170.90 L763.80 172.60 L766.90 168.70" fill="none" stroke="#3b87d3" stroke-width="1"/></svg><div class="cl" style="left:774px;top:167.40px">All</div><svg width="1024" height="575" viewBox="0 0 1024 575"><rect x="760.70" y="182.87" width="7" height="7" fill="#fff" stroke="#c4c4c4" stroke-width="0.8"/><path d="M762.20 186.27 L763.80 187.97 L766.90 184.07" fill="none" stroke="#3b87d3" stroke-width="1"/></svg><div class="cl" style="left:774px;top:182.77px">2014</div><svg width="1024" height="575" viewBox="0 0 1024 575"><rect x="760.70" y="198.24" width="7" height="7" fill="#fff" stroke="#c4c4c4" stroke-width="0.8"/><path d="M762.20 201.64 L763.80 203.34 L766.90 199.44" fill="none" stroke="#3b87d3" stroke-width="1"/></svg><div class="cl" style="left:774px;top:198.14px">2015</div><svg width="1024" height="575" viewBox="0 0 1024 575"><rect x="760.70" y="213.61" width="7" height="7" fill="#fff" stroke="#c4c4c4" stroke-width="0.8"/><path d="M762.20 217.01 L763.80 218.71 L766.90 214.81" fill="none" stroke="#3b87d3" stroke-width="1"/></svg><div class="cl" style="left:774px;top:213.51px">2016</div><svg width="1024" height="575" viewBox="0 0 1024 575"><rect x="760.70" y="228.98" width="7" height="7" fill="#fff" stroke="#c4c4c4" stroke-width="0.8"/><path d="M762.20 232.38 L763.80 234.08 L766.90 230.18" fill="none" stroke="#3b87d3" stroke-width="1"/></svg><div class="cl" style="left:774px;top:228.88px">2017</div><svg width="1024" height="575" viewBox="0 0 1024 575"><rect x="760.70" y="244.35" width="7" height="7" fill="#fff" stroke="#c4c4c4" stroke-width="0.8"/><path d="M762.20 247.75 L763.80 249.45 L766.90 245.55" fill="none" stroke="#3b87d3" stroke-width="1"/></svg><div class="cl" style="left:774px;top:244.25px">2018</div><svg width="1024" height="575" viewBox="0 0 1024 575"><rect x="760.70" y="259.72" width="7" height="7" fill="#fff" stroke="#c4c4c4" stroke-width="0.8"/><path d="M762.20 263.12 L763.80 264.82 L766.90 260.92" fill="none" stroke="#3b87d3" stroke-width="1"/></svg><div class="cl" style="left:774px;top:259.62px">2019</div><svg width="1024" height="575" viewBox="0 0 1024 575"><rect x="839.50" y="167.50" width="7" height="7" fill="#fff" stroke="#c4c4c4" stroke-width="0.8"/><path d="M841.00 170.90 L842.60 172.60 L845.70 168.70" fill="none" stroke="#3b87d3" stroke-width="1"/></svg><div class="cl" style="left:852.9px;top:167.40px">All</div><svg width="1024" height="575" viewBox="0 0 1024 575"><rect x="839.50" y="182.87" width="7" height="7" fill="#fff" stroke="#c4c4c4" stroke-width="0.8"/><path d="M841.00 186.27 L842.60 187.97 L845.70 184.07" fill="none" stroke="#3b87d3" stroke-width="1"/></svg><div class="cl" style="left:852.9px;top:182.77px">Q1</div><svg width="1024" height="575" viewBox="0 0 1024 575"><rect x="839.50" y="198.24" width="7" height="7" fill="#fff" stroke="#c4c4c4" stroke-width="0.8"/><path d="M841.00 201.64 L842.60 203.34 L845.70 199.44" fill="none" stroke="#3b87d3" stroke-width="1"/></svg><div class="cl" style="left:852.9px;top:198.14px">Q2</div><svg width="1024" height="575" viewBox="0 0 1024 575"><rect x="839.50" y="213.61" width="7" height="7" fill="#fff" stroke="#c4c4c4" stroke-width="0.8"/><path d="M841.00 217.01 L842.60 218.71 L845.70 214.81" fill="none" stroke="#3b87d3" stroke-width="1"/></svg><div class="cl" style="left:852.9px;top:213.51px">Q3</div><svg width="1024" height="575" viewBox="0 0 1024 575"><rect x="839.50" y="228.98" width="7" height="7" fill="#fff" stroke="#c4c4c4" stroke-width="0.8"/><path d="M841.00 232.38 L842.60 234.08 L845.70 230.18" fill="none" stroke="#3b87d3" stroke-width="1"/></svg><div class="cl" style="left:852.9px;top:228.88px">Q4</div><svg width="1024" height="575" viewBox="0 0 1024 575"><rect x="916.00" y="167.50" width="7" height="7" fill="#fff" stroke="#c4c4c4" stroke-width="0.8"/><path d="M917.50 170.90 L919.10 172.60 L922.20 168.70" fill="none" stroke="#3b87d3" stroke-width="1"/></svg><div class="cl" style="left:929.2px;top:167.40px">All</div><svg width="1024" height="575" viewBox="0 0 1024 575"><rect x="916.00" y="182.87" width="7" height="7" fill="#fff" stroke="#c4c4c4" stroke-width="0.8"/><path d="M917.50 186.27 L919.10 187.97 L922.20 184.07" fill="none" stroke="#3b87d3" stroke-width="1"/></svg><div class="cl" style="left:929.2px;top:182.77px">1</div><svg width="1024" height="575" viewBox="0 0 1024 575"><rect x="916.00" y="198.24" width="7" height="7" fill="#fff" stroke="#c4c4c4" stroke-width="0.8"/><path d="M917.50 201.64 L919.10 203.34 L922.20 199.44" fill="none" stroke="#3b87d3" stroke-width="1"/></svg><div class="cl" style="left:929.2px;top:198.14px">2</div><svg width="1024" height="575" viewBox="0 0 1024 575"><rect x="916.00" y="213.61" width="7" height="7" fill="#fff" stroke="#c4c4c4" stroke-width="0.8"/><path d="M917.50 217.01 L919.10 218.71 L922.20 214.81" fill="none" stroke="#3b87d3" stroke-width="1"/></svg><div class="cl" style="left:929.2px;top:213.51px">3</div><svg width="1024" height="575" viewBox="0 0 1024 575"><rect x="916.00" y="228.98" width="7" height="7" fill="#fff" stroke="#c4c4c4" stroke-width="0.8"/><path d="M917.50 232.38 L919.10 234.08 L922.20 230.18" fill="none" stroke="#3b87d3" stroke-width="1"/></svg><div class="cl" style="left:929.2px;top:228.88px">4</div><svg width="1024" height="575" viewBox="0 0 1024 575"><rect x="916.00" y="244.35" width="7" height="7" fill="#fff" stroke="#c4c4c4" stroke-width="0.8"/><path d="M917.50 247.75 L919.10 249.45 L922.20 245.55" fill="none" stroke="#3b87d3" stroke-width="1"/></svg><div class="cl" style="left:929.2px;top:244.25px">5</div><svg width="1024" height="575" viewBox="0 0 1024 575"><rect x="916.00" y="259.72" width="7" height="7" fill="#fff" stroke="#c4c4c4" stroke-width="0.8"/><path d="M917.50 263.12 L919.10 264.82 L922.20 260.92" fill="none" stroke="#3b87d3" stroke-width="1"/></svg><div class="cl" style="left:929.2px;top:259.62px">6</div><div class="abs" style="left:916px;top:274.6px;width:7px;height:0.8px;background:#c9c9c9"></div><div class="abs" style="left:953px;top:171.3px;width:6.6px;height:54px;background:#b3b3b3"></div><svg width="1024" height="575" viewBox="0 0 1024 575"><path d="M955.3 168.2 L956.3 166.9 L957.3 168.2 Z" fill="#bbb"/><path d="M955.3 269.8 L956.3 271.1 L957.3 269.8 Z" fill="#999"/></svg><div class="fh" style="left:742.7px;top:297.6px">Store Name</div><div class="dd" style="top:311px"></div><div class="t" style="left:746px;top:314.2px;font-size:6.7px;font-style:italic;color:#333">All values</div><div class="fh" style="left:742.7px;top:336.7px">State</div><div class="dd" style="top:349.6px"></div><div class="tok" style="left:743.4px;width:29.3px">Illinois<svg width="5" height="5" viewBox="0 0 5 5" style="left:auto;right:1.5px;top:2.6px"><path d="M0.6 0.6 L4.2 4.2 M4.2 0.6 L0.6 4.2" stroke="#222" stroke-width="1.05" fill="none"/></svg></div><div class="tok" style="left:774.7px;width:53.7px">Massachusetts<svg width="5" height="5" viewBox="0 0 5 5" style="left:auto;right:1.5px;top:2.6px"><path d="M0.6 0.6 L4.2 4.2 M4.2 0.6 L0.6 4.2" stroke="#222" stroke-width="1.05" fill="none"/></svg></div><div class="tok" style="left:830.8px;width:38.4px">New York<svg width="5" height="5" viewBox="0 0 5 5" style="left:auto;right:1.5px;top:2.6px"><path d="M0.6 0.6 L4.2 4.2 M4.2 0.6 L0.6 4.2" stroke="#222" stroke-width="1.05" fill="none"/></svg></div><div class="tok" style="left:871.6px;width:26.4px">Texas<svg width="5" height="5" viewBox="0 0 5 5" style="left:auto;right:1.5px;top:2.6px"><path d="M0.6 0.6 L4.2 4.2 M4.2 0.6 L0.6 4.2" stroke="#222" stroke-width="1.05" fill="none"/></svg></div><div class="t" style="left:900.5px;top:352.6px;font-size:6.6px;color:#333">4 More</div><svg width="1024" height="575" viewBox="0 0 1024 575"><path d="M949 316 L951.5 318.4 L954 316" fill="none" stroke="#666" stroke-width="0.7"/><path d="M949 354.6 L951.5 357 L954 354.6" fill="none" stroke="#666" stroke-width="0.7"/></svg></div><svg width="1024" height="575" viewBox="0 0 1024 575" style="z-index:4" fill="none" stroke-linecap="round" stroke-linejoin="round"><path d="M14.5 6.9 L11 10.4 L14.5 13.9" stroke="#44648a" stroke-width="1.2"/><path d="M25.9 10.4 L29.9 6.9 L33.9 10.4 M27.1 9.8 L27.1 13.7 L28.9 13.7 L28.9 11.4 L30.9 11.4 L30.9 13.7 L32.7 13.7 L32.7 9.8" stroke="#5b7899" stroke-width="0.85"/><defs><linearGradient id="g0" x1="0" y1="0" x2="0" y2="1"><stop offset="0" stop-color="#16a8e8"/><stop offset="1" stop-color="#1c8fdb"/></linearGradient></defs><polygon points="43.9,3 72.7,3 58.6,17.3 43.9,17.3" fill="url(#g0)" stroke="none"/><text x="45.2" y="14.8" font-size="12" font-weight="bold" fill="#fff" stroke="#fff" stroke-width="0.5" textLength="19.6" lengthAdjust="spacingAndGlyphs">SAP</text><text x="426.5" y="13.5" font-size="9.1" fill="#3f5b78" stroke="none" textLength="183" lengthAdjust="spacingAndGlyphs">GBO_ZZ_BI 2025 - Revenue Analysis Das...</text><path d="M614.6 9.6 L617.2 12.2 L619.8 9.6" stroke="#3a5878" stroke-width="0.7"/><circle cx="915.9" cy="9.6" r="2.5" stroke="#4f6e92" stroke-width="0.8"/><path d="M917.8 11.5 L920.2 13.9" stroke="#4f6e92" stroke-width="0.9"/><path d="M938.4 13 L944.8 13 L943.8 11.6 L943.8 9.2 A2.2 2.2 0 0 0 939.4 9.2 L939.4 11.6 Z M940.9 14 L942.3 14" stroke="#4f6e92" stroke-width="0.8"/><circle cx="963" cy="10.6" r="3.9" stroke="#4f6e92" stroke-width="0.7"/><text x="963" y="13.1" font-size="7" fill="#4f6e92" stroke="none" text-anchor="middle">?</text><circle cx="989.5" cy="10.6" r="8.6" fill="#0f9ad8" stroke="none"/><text x="989.5" y="12.7" font-size="5.8" font-weight="bold" fill="#fff" stroke="none" text-anchor="middle">A</text><text x="7" y="31.9" font-size="7.2" fill="#5f6c7a" stroke="none">File</text><text x="168" y="31.9" font-size="7.2" fill="#5f6c7a" stroke="none">Query</text><text x="201" y="31.9" font-size="7.2" fill="#5f6c7a" stroke="none">Analyze</text><text x="275" y="31.9" font-size="7.2" fill="#5f6c7a" stroke="none">Display</text><rect x="163.15" y="31" width="0.7" height="18" fill="#c9d3de" stroke="none"/><rect x="196.15" y="31" width="0.7" height="18" fill="#c9d3de" stroke="none"/><rect x="270.15" y="31" width="0.7" height="18" fill="#c9d3de" stroke="none"/><path d="M10.6 39.6 L15.4 39.6 L15.4 47.8 L8.8 47.8 L8.8 41.4 Z M10.6 39.6 L10.6 41.4 L8.8 41.4" stroke="#3a5878" stroke-width="0.8"/><path d="M26.6 41.6 L28.8 41.6 L29.4 42.6 L33 42.6 M27.2 42.8 L27.2 46.6 L33.4 46.6 L33.4 40.6 L29.6 40.6" stroke="#3a5878" stroke-width="0.8"/><circle cx="34.2" cy="48.2" r="2.1" fill="#e9730c" stroke="none"/><path d="M44.6 40.2 L51.6 40.2 L51.6 47.2 L44.6 47.2 Z M46.4 47 L46.4 43.6 L48.4 43.6 L48.4 47 M49.8 47 L49.8 42.4" stroke="#3a5878" stroke-width="0.8"/><path d="M61 42.7 L63.2 44.9 L65.4 42.7" stroke="#8da0b5" stroke-width="0.7"/><path d="M79.2 40.4 L76.8 42.6 L79.2 44.8 M77 42.6 L81.2 42.6 A2.3 2.3 0 0 1 81.2 47.2 L76.6 47.2" stroke="#24405e" stroke-width="1.1"/><path d="M98.6 40.4 L101 42.6 L98.6 44.8 M100.8 42.6 L96.6 42.6 A2.3 2.3 0 0 0 96.6 47.2 L101.2 47.2" stroke="#a9bccf" stroke-width="1"/><path d="M116 39.8 L116 45 M113.8 43 L116 45.2 L118.2 43 M112.2 47.6 L119.8 47.6" stroke="#3a5878" stroke-width="0.9"/><polygon points="134.30,40.00 135.42,42.66 138.29,42.90 136.11,44.79 136.77,47.60 134.30,46.10 131.83,47.60 132.49,44.79 130.31,42.90 133.18,42.66" stroke="#3a5878" stroke-width="0.8"/><circle cx="150.70000000000002" cy="43.9" r="0.85" fill="#3a5878" stroke="none"/><circle cx="153.3" cy="43.9" r="0.85" fill="#3a5878" stroke="none"/><circle cx="155.9" cy="43.9" r="0.85" fill="#3a5878" stroke="none"/><path d="M176.2 42 A3.6 3.6 0 1 0 176.6 45.4 M174.2 39.6 L176.4 41.8 L173.6 42.4" stroke="#6d849c" stroke-width="0.8"/><path d="M185.8 42.7 L188 44.9 L190.2 42.7" stroke="#8da0b5" stroke-width="0.7"/><path d="M202.6 40.6 L210 40.6 L207.2 44 L207.2 47.2 L205.4 46.4 L205.4 44 Z" stroke="#3a5878" stroke-width="0.85"/><path d="M221.8 40.2 L224.4 42.2 L227 40.2" stroke="#3a5878" stroke-width="1"/><path d="M221.8 42.6 L224.4 44.6 L227 42.6" stroke="#3a5878" stroke-width="1"/><path d="M221.8 45.0 L224.4 47.0 L227 45.0" stroke="#3a5878" stroke-width="1"/><circle cx="243" cy="44" r="3.7" stroke="#a9bccf" stroke-width="0.8"/><path d="M243 41.8 L243 44.2 L244.8 45" stroke="#a9bccf" stroke-width="0.7"/><path d="M238.4 41.2 L240.2 41.4 L239.8 43" stroke="#a9bccf" stroke-width="0.7"/><path d="M261 43.4 L264.4 41.6 L264.4 46 L261 47.8 Z" fill="#8fa5bd" stroke="none"/><path d="M261 39.8 L264.4 41.6 L264.4 46 L261 47.8 L257.6 46 L257.6 41.6 Z M257.6 41.6 L261 43.4 L264.4 41.6 M261 43.4 L261 47.8 M259.3 42.6 L259.3 46.8 M262.7 42.6 L262.7 46.8" stroke="#9fb2c6" stroke-width="0.7"/><path d="M276.6 42.4 L276.6 40.4 L278.8 40.4 M281.4 40.4 L284 40.4 L284 42.6 M284 45.4 L284 47.6 L281.6 47.6 M278.8 47.6 L276.6 47.6 L276.6 45.4 M281.8 42.6 L284 40.4 M278.8 45.4 L276.6 47.6" stroke="#3a5878" stroke-width="0.8"/><path d="M295.4 42 L301.6 42 L301.6 47.4 L295.4 47.4 Z M296.6 40.6 L296.6 42 M300.4 40.6 L300.4 42" stroke="#6d849c" stroke-width="0.7"/><path d="M313.6 42.6 L313.6 47.4 L320 47.4 L320 40.4 L315.4 40.4 M316.8 42 L316.8 45.8 M314.9 43.9 L318.7 43.9 M312.6 40.2 L313.8 40.2" stroke="#3a5878" stroke-width="0.7"/><path d="M331 40.6 L339.2 40.6 L339.2 46 L331 46 Z M333.4 47.6 L336.8 47.6" stroke="#3a5878" stroke-width="0.85"/><circle cx="351.0" cy="43.9" r="0.85" fill="#5d7791" stroke="none"/><circle cx="353.6" cy="43.9" r="0.85" fill="#5d7791" stroke="none"/><circle cx="356.20000000000005" cy="43.9" r="0.85" fill="#5d7791" stroke="none"/><rect x="966.6" y="36.3" width="51.6" height="12.9" rx="1.2" fill="#fbfcfd" stroke="#b9b9b9" stroke-width="0.7"/><rect x="1001.3" y="36.6" width="0.7" height="12.3" fill="#b9b9b9" stroke="none"/><text x="971" y="45.1" font-size="6.6" fill="#3f5b78" stroke="none">Reading</text><path d="M1007.8 42.2 L1010.2 44.6 L1012.6 42.2" stroke="#6d849c" stroke-width="0.7"/><path d="M77.1 199.4 L86.3 191.6 L95.5 199.4" stroke="#1f1fff" stroke-width="1.4"/><path d="M79.7 200.2 L86.3 195.2 L92.9 200.2 L92.9 207.3 L88.4 207.3 L88.4 202.8 L84.2 202.8 L84.2 207.3 L79.7 207.3 Z" stroke="#1f1fff" stroke-width="1.4"/><rect x="76.4" y="208.8" width="19.6" height="2" fill="#1f1fff" stroke="none"/><rect x="83.3" y="247.5" width="11.5" height="12.2" fill="#8c8c8c" stroke="none"/><path d="M85.9 257.4 L85.9 254 M89.3 257.4 L89.3 250.4 M92.2 257.4 L92.2 252.2" stroke="#fff" stroke-width="1.3" stroke-linecap="butt"/><rect x="76.9" y="254.7" width="4.6" height="4.6" stroke="#9a9a9a" stroke-width="0.8"/><rect x="83.4" y="261.6" width="4.8" height="4.4" stroke="#9a9a9a" stroke-width="0.8"/><rect x="78.7" y="261.6" width="2.8" height="2.8" fill="#8c8c8c" stroke="none"/><path d="M78.9 314 L77.6 314 L77.6 309.1 L86.6 309.1 L86.6 310.4" stroke="#1f1fff" stroke-width="1.4"/><path d="M85.2 314.3 L85.2 313.2 L95 313.2 L95 316.6 L90.1 322.7 L89.3 321.4" stroke="#1f1fff" stroke-width="1.4"/><path d="M77.7 316.9 L86.6 316.9 L86.6 320.7 L82.1 326 L77.7 320.7 Z" stroke="#1f1fff" stroke-width="1.4"/><rect x="76.4" y="327.2" width="3.4" height="1.7" fill="#1f1fff" stroke="none"/><rect x="84" y="327.2" width="11.9" height="1.7" fill="#1f1fff" stroke="none"/><path d="M91.4 369.3 L91.4 365.4 Q91.4 364.7 90.7 364.7 L78.3 364.7 Q77.6 364.7 77.6 365.4 L77.6 374.7 Q77.6 375.4 78.3 375.4 L88 375.4" stroke="#1f1fff" stroke-width="1.4"/><path d="M81.7 377.5 L87 377.5" stroke="#5a5aff" stroke-width="0.9"/><rect x="90.1" y="371.5" width="4.95" height="8.1" rx="0.9" stroke="#1f1fff" stroke-width="1.4"/><rect x="76.4" y="381.2" width="19.6" height="2" fill="#1f1fff" stroke="none"/><circle cx="9.8" cy="566" r="7.3" fill="#fff" fill-opacity="0.35" stroke="#cfd4da" stroke-width="0.6"/><circle cx="30.3" cy="566" r="7.3" fill="#fff" fill-opacity="0.35" stroke="#cfd4da" stroke-width="0.6"/><circle cx="50.8" cy="566" r="7.3" fill="#fff" fill-opacity="0.35" stroke="#cfd4da" stroke-width="0.6"/><circle cx="71.3" cy="566" r="7.3" fill="#fff" fill-opacity="0.35" stroke="#cfd4da" stroke-width="0.6"/><circle cx="90.8" cy="566" r="7.3" fill="#fff" fill-opacity="0.35" stroke="#cfd4da" stroke-width="0.6"/><circle cx="111.3" cy="566" r="7.3" fill="#fff" fill-opacity="0.35" stroke="#cfd4da" stroke-width="0.6"/><circle cx="152" cy="566" r="7.3" fill="#fff" fill-opacity="0.35" stroke="#cfd4da" stroke-width="0.6"/><path d="M11 563 L7.6 566 L11 569 Z" stroke="#d5dae0" stroke-width="0.6"/><path d="M29.2 563 L32.6 566 L29.2 569 Z" stroke="#d5dae0" stroke-width="0.6"/><path d="M48 569 L53.6 563" stroke="#dde1e6" stroke-width="1.6"/><path d="M68.6 563.4 L72.4 563.4 L72.4 567 M70.4 565 L74.2 565 L74.2 569 L70.4 569 Z" stroke="#d5d8dc" stroke-width="0.8"/><circle cx="90" cy="565.2" r="2.4" stroke="#d5d8dc" stroke-width="0.8"/><path d="M91.8 567 L94 569.2" stroke="#d5d8dc" stroke-width="1"/><rect x="108" y="563.2" width="6.6" height="5.6" stroke="#d5d8dc" stroke-width="0.8"/><path d="M108 567 L114.6 567" stroke="#d5d8dc" stroke-width="0.8"/><circle cx="150" cy="566" r="0.6" fill="#d5d8dc" stroke="none"/><circle cx="152" cy="566" r="0.6" fill="#d5d8dc" stroke="none"/><circle cx="154" cy="566" r="0.6" fill="#d5d8dc" stroke="none"/><circle cx="131.3" cy="566" r="7.3" fill="#fff" stroke="#9a9a9a" stroke-width="0.7"/><rect x="127.4" y="563.4" width="5.6" height="5.2" rx="1" stroke="#222" stroke-width="1"/><path d="M134.6 564 L134.6 568" stroke="#222" stroke-width="1.8" stroke-linecap="butt"/></svg></body></html>
